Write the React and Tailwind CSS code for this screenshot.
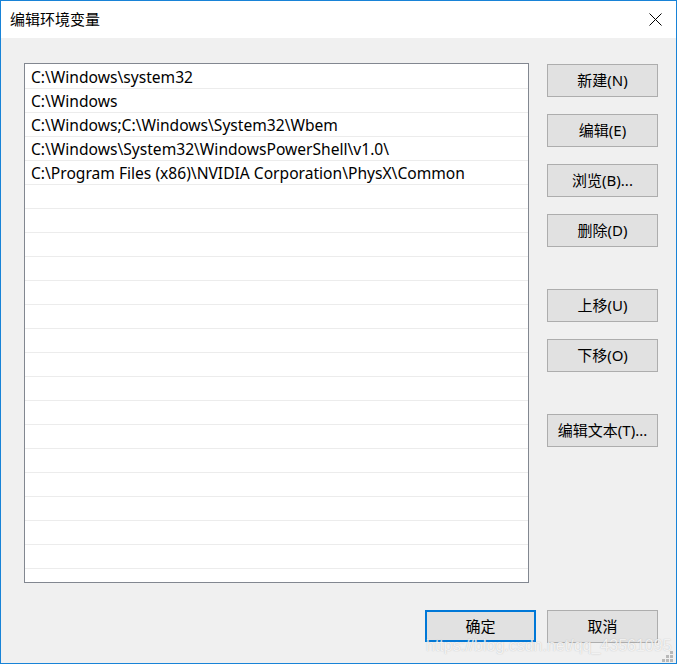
import React from 'react';

const paths = [
    'C:\\Windows\\system32',
    'C:\\Windows',
    'C:\\Windows;C:\\Windows\\System32\\Wbem',
    'C:\\Windows\\System32\\WindowsPowerShell\\v1.0\\',
    'C:\\Program Files (x86)\\NVIDIA Corporation\\PhysX\\Common'
];

const rows = Array.from({ length: 22 }, (_, i) => paths[i] || '');

const font = { fontFamily: '"Noto Sans", "Noto Sans CJK SC", sans-serif' };

const Btn = ({ children, primary, className = '' }) => (
    <button
        className={`w-[111px] flex items-center justify-center bg-[#e1e1e1] text-[15px] text-black ${primary ? 'border-2 border-[#0078d7] h-[32px]' : 'border border-[#adadad] h-[33px]'} ${className}`}
    >
        {children}
    </button>
);

const App = () => {
    return (
        <div className="relative w-[677px] h-[664px] border border-[#1883d7] flex flex-col bg-white overflow-hidden" style={font}>
            <div className="h-[37px] flex items-center justify-between pl-[9px] pr-[14px] bg-white">
                <span className="text-[15px] leading-none text-black">编辑环境变量</span>
                <svg width="13" height="13" viewBox="0 0 13 13">
                    <path d="M0.5 0.5 L12.5 12.5 M12.5 0.5 L0.5 12.5" stroke="#000" strokeWidth="1" />
                </svg>
            </div>

            <div className="flex-1 bg-[#f0f0f0] flex flex-col pt-[25px] pl-[23px] pr-[18px]">
                <div className="flex">
                    <div className="w-[505px] h-[520px] border border-[#828790] bg-white pt-[1px] overflow-hidden">
                        {rows.map((p, i) => (
                            <div key={i} className="h-[24px] border-b border-[#ececec] flex items-center pt-[2px] pl-[6px] text-[15.6px] text-black whitespace-nowrap">
                                {p}
                            </div>
                        ))}
                    </div>

                    <div className="ml-[18px] mt-[1px] flex flex-col">
                        <Btn>新建(N)</Btn>
                        <Btn className="mt-[17px]">编辑(E)</Btn>
                        <Btn className="mt-[17px]">浏览(B)...</Btn>
                        <Btn className="mt-[17px]">删除(D)</Btn>
                        <Btn className="mt-[42px]">上移(U)</Btn>
                        <Btn className="mt-[17px]">下移(O)</Btn>
                        <Btn className="mt-[42px]">编辑文本(T)...</Btn>
                    </div>
                </div>

                <div className="mt-[27px] flex justify-end gap-[11px]">
                    <Btn primary>确定</Btn>
                    <Btn className="h-[32px]">取消</Btn>
                </div>
            </div>

            <div
                className="absolute left-[425px] top-[636px] text-[16px] leading-[18px] text-white/80 whitespace-nowrap pointer-events-none"
                style={{ fontFamily: '"Liberation Sans", sans-serif', textShadow: '0 0 1px rgba(120,120,120,0.5)' }}
            >
                https://blog.csdn.net/qq_43561095
            </div>

            <div className="absolute right-[3px] bottom-[1px] grid grid-cols-3 gap-[1px]">
                <span className="w-[3px] h-[3px]" />
                <span className="w-[3px] h-[3px]" />
                <span className="w-[3px] h-[3px] bg-[#b8b8b8]" />
                <span className="w-[3px] h-[3px]" />
                <span className="w-[3px] h-[3px] bg-[#b8b8b8]" />
                <span className="w-[3px] h-[3px] bg-[#b8b8b8]" />
                <span className="w-[3px] h-[3px] bg-[#b8b8b8]" />
                <span className="w-[3px] h-[3px] bg-[#b8b8b8]" />
                <span className="w-[3px] h-[3px] bg-[#b8b8b8]" />
            </div>
        </div>
    );
};

export default App;
